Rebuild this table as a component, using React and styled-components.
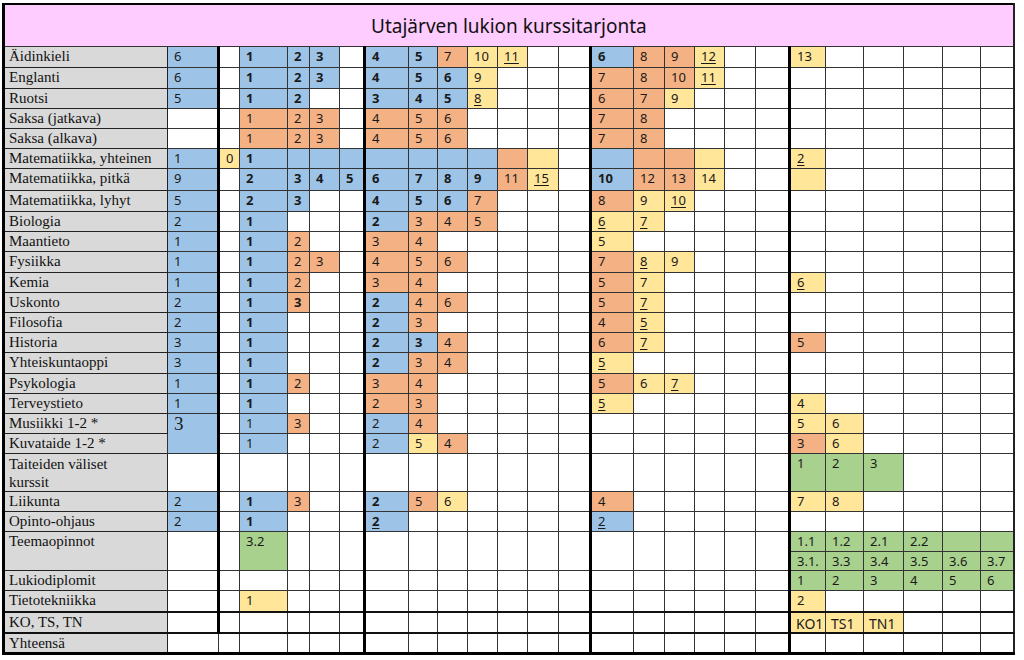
import React from 'react';
import styled, { createGlobalStyle } from 'styled-components';

const GlobalStyle = createGlobalStyle`
body {
  margin:0;
  background:#fff;
}
`;

const COLORS = {
  b: '#9dc3e6',
  o: '#f4b183',
  y: '#ffe699',
  g: '#a9d18e',
  w: '#ffffff',
};

// right edge of these data columns is the heavy black line
const THICK = [1, 6, 13, 19];
const WIDTHS = [164, 51, 21, 48, 22, 30, 25, 44, 29, 30, 30, 30, 31, 32, 43, 31, 30, 30, 31, 34, 36, 38, 40, 39, 38, 33];

const W = (n) => Array(n).fill('w').join(' ');

const rows = [
  { label: 'Äidinkieli', h: 21, cells: 'b6 w B1 B2 B3 w B4 B5 o7 y10 y_11 w w B6 o8 o9 y_12 w w y13 w w w w w' },
  { label: 'Englanti', h: 21, cells: 'b6 w B1 B2 B3 w B4 B5 B6 y9 w w w o7 o8 o10 y_11 w w w w w w w w' },
  { label: 'Ruotsi', h: 20, cells: 'b5 w B1 B2 w w B3 B4 B5 y_8 w w w o6 o7 y9 ' + W(9) },
  { label: 'Saksa  (jatkava)', h: 20, cells: 'w w o1 o2 o3 w o4 o5 o6 w w w w o7 o8 ' + W(10) },
  { label: 'Saksa (alkava)', h: 20, cells: 'w w o1 o2 o3 w o4 o5 o6 w w w w o7 o8 ' + W(10) },
  { label: 'Matematiikka, yhteinen', h: 20, cells: 'b1 y0 B1 b b b b b b b o y w b o o y w w y_2 ' + W(5) },
  { label: 'Matematiikka, pitkä', h: 22, cells: 'b9 w B2 B3 B4 B5 B6 B7 B8 B9 o11 y_15 w B10 o12 o13 y14 w w y ' + W(5) },
  { label: 'Matematiikka, lyhyt', h: 21, cells: 'b5 w B2 B3 w w B4 B5 B6 o7 w w w o8 y9 y_10 ' + W(9) },
  { label: 'Biologia', h: 20, cells: 'b2 w B1 w w w B2 o3 o4 o5 w w w y_6 y_7 ' + W(10) },
  { label: 'Maantieto', h: 20, cells: 'b1 w B1 o2 w w o3 o4 w w w w w y5 ' + W(11) },
  { label: 'Fysiikka', h: 21, cells: 'b1 w B1 o2 o3 w o4 o5 o6 w w w w o7 y_8 y9 ' + W(9) },
  { label: 'Kemia', h: 20, cells: 'b1 w B1 o2 w w o3 o4 w w w w w o5 y7 w w w w y_6 ' + W(5) },
  { label: 'Uskonto', h: 20, cells: 'b2 w B1 O3 w w B2 o4 o6 w w w w o5 y_7 ' + W(10) },
  { label: 'Filosofia', h: 20, cells: 'b2 w B1 w w w B2 o3 w w w w w o4 y_5 ' + W(10) },
  { label: 'Historia', h: 20, cells: 'b3 w B1 w w w B2 B3 o4 w w w w o6 y_7 w w w w o5 ' + W(5) },
  { label: 'Yhteiskuntaoppi', h: 21, cells: 'b3 w B1 w w w B2 o3 o4 w w w w y_5 ' + W(11) },
  { label: 'Psykologia', h: 20, cells: 'b1 w B1 o2 w w o3 o4 w w w w w o5 y6 y_7 ' + W(9) },
  { label: 'Terveystieto', h: 20, cells: 'b1 w B1 w w w o2 o3 w w w w w y_5 w w w w w y4 ' + W(5) },
  { label: 'Musiikki  1-2 *', h: 20, cells: '^b!3 w b1 o3 w w b2 o4 ' + W(11) + ' y5 y6 ' + W(4) },
  { label: 'Kuvataide 1-2 *', h: 20, start: 2, cells: 'w b1 w w w b2 y5 o4 ' + W(10) + ' o3 y6 ' + W(4) },
  { label: 'Taiteiden väliset\nkurssit', h: 37, tall: true, cells: W(19) + ' g1 g2 g3 ' + W(3) },
  { label: 'Liikunta', h: 20, cells: 'b2 w B1 o3 w w B2 o5 y6 w w w w o4 w w w w w y7 y8 ' + W(4) },
  { label: 'Opinto-ohjaus', h: 20, cells: 'b2 w B1 w w w B_2 w w w w w w b_2 ' + W(11) },
  { label: 'Teemaopinnot', span: 2, h: 20, cells: '^w ^w ^g3.2 ' + Array(16).fill('^w').join(' ') + ' g1.1 g1.2 g2.1 g2.2 g g' },
  { h: 19, start: 20, cells: 'g3.1. g3.3 g3.4 g3.5 g3.6 g3.7' },
  { label: 'Lukiodiplomit', h: 20, cells: W(19) + ' g1 g2 g3 g4 g5 g6' },
  { label: 'Tietotekniikka', h: 21, cells: 'w w y1 ' + W(16) + ' y2 ' + W(5) },
  { label: 'KO, TS, TN', h: 21, heavy: true, big: true, cells: W(19) + ' yKO1 yTS1 yTN1 w w w' },
  { label: 'Yhteensä', h: 20, heavy: true, last: true, cells: W(25) },
];

const parse = (tok) => {
  let span = 1;
  let big = false;
  let u = false;
  if (tok[0] === '^') { span = 2; tok = tok.slice(1); }
  const c = tok[0];
  let text = tok.slice(1);
  if (text[0] === '!') { big = true; text = text.slice(1); }
  if (text[0] === '_') { u = true; text = text.slice(1); }
  return { bg: COLORS[c.toLowerCase()], bold: c !== c.toLowerCase(), text, u, span, big };
};

const Page = styled.div`
padding:3px 0 0 2px;
`;

const Sheet = styled.table`
border-collapse:collapse;
table-layout:fixed;
width:1011px;
border-top:2px solid #000;
border-left:3px solid #000;
border-right:2px solid #222;
border-bottom:3px solid #000;
`;

const Row = styled.tr`
height:${(p) => p.$h}px;
& > td {
  border-top:${(p) => (p.$heavy ? '2px solid #111' : '1px solid #333')};
}
`;

const TitleCell = styled.td`
height:41px;
background:#ffccff;
border-bottom:1px solid #333;
text-align:center;
vertical-align:middle;
font-family:"Noto Sans", "Open Sans", sans-serif;
font-size:19px;
color:#111;
padding:0;
`;

const Label = styled.td`
background:#d9d9d9;
border:1px solid #222;
padding:1px 0 0 4px;
vertical-align:top;
font-family:"Liberation Serif", "Times New Roman", serif;
font-size:15px;
line-height:${(p) => (p.$tall ? '18px' : '17px')};
color:#111;
white-space:pre-line;
`;

const Cell = styled.td`
background:${(p) => p.$bg};
border:1px solid #333;
border-right:${(p) => (p.$thick ? '3px solid #000' : '1px solid #333')};
padding:${(p) => (p.$big ? '2px 0 0 5px' : '1px 0 0 6px')};
vertical-align:top;
font-family:${(p) => (p.$serif ? '"Liberation Serif", serif' : '"Noto Sans", "Open Sans", sans-serif')};
font-size:${(p) => (p.$serif ? '19px' : p.$big ? '14px' : '13px')};
font-weight:${(p) => (p.$bold ? 700 : 400)};
line-height:17px;
color:#1a1a1a;
text-decoration:${(p) => (p.$u ? 'underline' : 'none')};
text-underline-offset:2px;
white-space:nowrap;
overflow:hidden;
`;

export default function App() {
  return (
    <>
      <GlobalStyle />
      <Page>
        <Sheet>
          <colgroup>
            {WIDTHS.map((w, i) => <col key={i} style={{ width: w }} />)}
          </colgroup>
          <tbody>
            <tr>
              <TitleCell colSpan={26}>Utajärven lukion kurssitarjonta</TitleCell>
            </tr>
            {rows.map((r, ri) => {
              const start = r.start || 1;
              return (
                <Row key={ri} $h={r.h} $heavy={r.heavy}>
                  {r.label && <Label rowSpan={r.span || 1} $tall={r.tall}>{r.label}</Label>}
                  {r.cells.split(' ').map((tok, ci) => {
                    const c = parse(tok);
                    const col = start + ci;
                    const thick = THICK.includes(col) && !(r.last && col === 1);
                    return (
                      <Cell
                        key={ci}
                        rowSpan={c.span}
                        $bg={c.bg}
                        $bold={c.bold}
                        $u={c.u}
                        $thick={thick}
                        $serif={c.big}
                        $big={r.big}
                      >
                        {c.text}
                      </Cell>
                    );
                  })}
                </Row>
              );
            })}
          </tbody>
        </Sheet>
      </Page>
    </>
  );
}
